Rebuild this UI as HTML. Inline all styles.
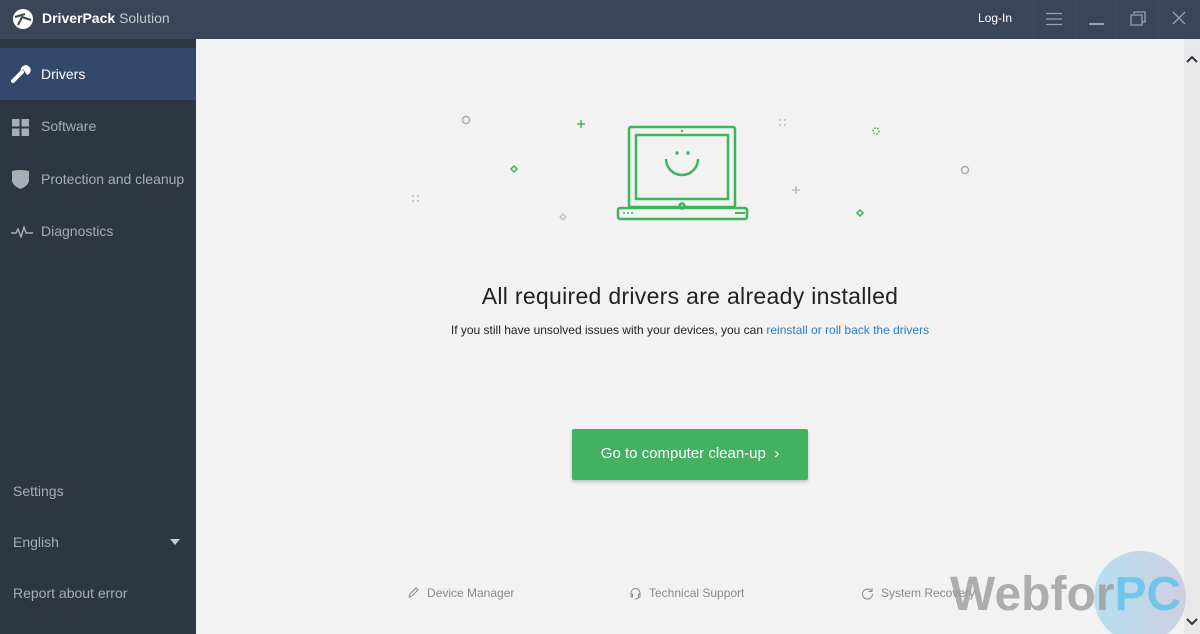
<!DOCTYPE html>
<html><head><meta charset="utf-8"><style>
*{margin:0;padding:0;box-sizing:border-box}
html{width:1200px;height:634px;overflow:hidden}
body{width:1200px;height:634px;overflow:hidden;font-family:"Liberation Sans",sans-serif;background:#f2f2f2;position:relative}
.top{position:absolute;left:0;top:0;width:1200px;height:39px;background:#3a4557}
.side{position:absolute;left:0;top:39px;width:196px;height:595px;background:#2e3644}
.item{position:absolute;left:0;width:196px;height:52px;color:#a9adb5;font-size:14px;line-height:52px;padding-left:41px}
.abs{position:absolute}
.sep{position:absolute;top:0;width:1px;height:39px;background:#45506280}
.foot{position:absolute;top:586px;font-size:12px;color:#8a8a8a}
</style></head><body>
<div class="top">
 <svg class="abs" style="left:12px;top:8px" width="22" height="22" viewBox="0 0 22 22"><circle cx="11" cy="11" r="10" fill="#fff"/><path d="M3 9 L13 6 M6 17 L10 9 L19 12" stroke="#3a4557" stroke-width="2" fill="none"/></svg>
 <div class="abs" style="left:42px;top:10px;font-size:14px;color:#fff"><b>DriverPack</b> <span style="color:#c4c8d0">Solution</span></div>
 <div class="abs" style="left:978px;top:11px;font-size:12px;color:#fff">Log-In</div>
 <div class="sep" style="left:1033px"></div><div class="sep" style="left:1075px"></div><div class="sep" style="left:1116px"></div><div class="sep" style="left:1158px"></div>
 <svg class="abs" style="left:1046px;top:12px" width="16" height="14"><path d="M0 1.5H16M0 7H16M0 12.5H16" stroke="#9aa2ae" stroke-width="1.3"/></svg>
 <div class="abs" style="left:1089px;top:23px;width:15px;height:1.5px;background:#9aa2ae"></div>
 <svg class="abs" style="left:1130px;top:11px" width="16" height="15"><path d="M4 3V1H15V11H12M1 4H12V14H1Z" stroke="#9aa2ae" stroke-width="1.3" fill="none"/></svg>
 <svg class="abs" style="left:1172px;top:11px" width="14" height="14"><path d="M1 1L13 13M13 1L1 13" stroke="#9aa2ae" stroke-width="1.3"/></svg>
</div>
<div class="side">
 <div class="item" style="top:9px;background:#34486b;color:#fff">Drivers</div>
 <svg class="abs" style="left:11px;top:26px" width="20" height="18" viewBox="0 0 20 18"><path d="M2 16L11 7" stroke="#fff" stroke-width="4" stroke-linecap="round"/><path d="M10 7A5 5 0 1 1 16 10L14 7L12 4Z" fill="#fff"/></svg>
 <div class="item" style="top:61px">Software</div>
 <svg class="abs" style="left:12px;top:80px" width="17" height="17"><rect x="0" y="0" width="7.5" height="7.5" fill="#a9adb5"/><rect x="9.5" y="0" width="7.5" height="7.5" fill="#a9adb5"/><rect x="0" y="9.5" width="7.5" height="7.5" fill="#a9adb5"/><rect x="9.5" y="9.5" width="7.5" height="7.5" fill="#a9adb5"/></svg>
 <div class="item" style="top:114px">Protection and cleanup</div>
 <svg class="abs" style="left:12px;top:131px" width="17" height="19"><path d="M0 1Q8 -1 17 1V11Q16 16 8.5 19Q1 16 0 11Z" fill="#a9adb5"/></svg>
 <div class="item" style="top:166px">Diagnostics</div>
 <svg class="abs" style="left:11px;top:187px" width="22" height="12"><path d="M0 7H5L7 3L10 11L13 1L15 7H22" stroke="#a9adb5" stroke-width="1.4" fill="none"/></svg>
 <div class="abs" style="left:13px;top:444px;font-size:14px;color:#a9adb5">Settings</div>
 <div class="abs" style="left:13px;top:495px;font-size:14px;color:#a9adb5">English</div>
 <div class="abs" style="left:170px;top:500px;border-left:5px solid transparent;border-right:5px solid transparent;border-top:6px solid #c8ccd2"></div>
 <div class="abs" style="left:13px;top:546px;font-size:14px;color:#a9adb5">Report about error</div>
</div>
<div class="abs" style="left:1184px;top:39px;width:16px;height:595px;background:#e8e8e8"></div>
<svg class="abs" style="left:1186px;top:55px" width="12" height="8"><path d="M1 7L6 2L11 7" stroke="#2e3644" stroke-width="2" fill="none"/></svg>
<svg class="abs" style="left:1186px;top:618px" width="12" height="8"><path d="M1 1L6 6L11 1" stroke="#2e3644" stroke-width="2" fill="none"/></svg>
<svg class="abs" style="left:400px;top:110px" width="590" height="120">
 <g stroke="#3cb55c" stroke-width="2.5" fill="none">
  <rect x="229" y="17" width="106" height="80" rx="2"/><rect x="236" y="25" width="92" height="64"/>
  <rect x="218" y="98" width="129" height="11" rx="2"/>
  <path d="M266 49A16 16 0 0 0 298 49"/><circle cx="282" cy="96" r="2.5"/>
 </g>
 <g fill="#3cb55c"><circle cx="277" cy="43" r="1.7"/><circle cx="288" cy="43" r="1.7"/><circle cx="282" cy="21" r="1.2"/>
  <rect x="335" y="102" width="10" height="2"/><circle cx="224" cy="103" r="1"/><circle cx="228" cy="103" r="1"/><circle cx="232" cy="103" r="1"/></g>
 <circle cx="66" cy="10" r="3.5" stroke="#aaa" stroke-width="1.5" fill="none"/>
 <circle cx="565" cy="60" r="3.5" stroke="#aaa" stroke-width="1.5" fill="none"/>
 <path d="M181 10V18M177 14H185" stroke="#3cb55c" stroke-width="1.5"/>
 <path d="M396 76V84M392 80H400" stroke="#bbb" stroke-width="1.5"/>
 <path d="M114 56L117 59L114 62L111 59Z" stroke="#3cb55c" stroke-width="1.5" fill="none"/>
 <path d="M460 100L463 103L460 106L457 103Z" stroke="#3cb55c" stroke-width="1.5" fill="none"/>
 <path d="M163 104L166 107L163 110L160 107Z" stroke="#bbb" stroke-width="1.2" fill="none"/>
 <circle cx="476" cy="21" r="3" stroke="#3cb55c" stroke-width="1.5" fill="none" stroke-dasharray="1.5 1.5"/>
 <g fill="#bbb"><circle cx="380" cy="10" r="1"/><circle cx="385" cy="10" r="1"/><circle cx="380" cy="15" r="1"/><circle cx="385" cy="15" r="1"/>
 <circle cx="13" cy="86" r="1"/><circle cx="18" cy="86" r="1"/><circle cx="13" cy="91" r="1"/><circle cx="18" cy="91" r="1"/></g>
</svg>
<div class="abs" style="left:196px;width:988px;top:283px;text-align:center;font-size:23px;color:#222;letter-spacing:0.3px">All required drivers are already installed</div>
<div class="abs" style="left:196px;width:988px;top:323px;text-align:center;font-size:12px;color:#222">If you still have unsolved issues with your devices, you can <span style="color:#2a7fc0">reinstall or roll back the drivers</span></div>
<div class="abs" style="left:572px;top:429px;width:236px;height:51px;background:#43b062;border-radius:2px;box-shadow:0 2px 3px rgba(0,0,0,.2);color:#fff;font-size:15px;line-height:50px;text-align:center">Go to computer clean-up &nbsp;›</div>
<svg class="abs" style="left:407px;top:587px" width="12" height="12"><path d="M2 10L3 7L9 1L11 3L5 9Z" stroke="#888" fill="none"/></svg>
<div class="foot" style="left:427px">Device Manager</div>
<svg class="abs" style="left:629px;top:587px" width="13" height="13"><path d="M2 8V6A4.5 4.5 0 0 1 11 6V8M2 7H3.5V10H2ZM9.5 7H11V10H9.5ZM10 10Q9 12 6 12" stroke="#888" fill="none"/></svg>
<div class="foot" style="left:649px">Technical Support</div>
<svg class="abs" style="left:861px;top:587px" width="13" height="13"><path d="M10.5 4A5 5 0 1 0 11.5 7M11 1V4.5H7.5" stroke="#888" fill="none"/></svg>
<div class="foot" style="left:881px">System Recovery</div>
<div class="abs" style="left:1094px;top:551px;width:92px;height:83px;overflow:hidden"><div style="width:92px;height:92px;border-radius:50%;background:linear-gradient(90deg,#b5dff0,#cfcfe0)"></div></div>
<div class="abs" style="left:950px;top:567px;font-size:48px;color:#9c9c9c;opacity:.8;font-weight:bold">Webfor<span style="color:#5ec2ea">PC</span></div>
</body></html>
